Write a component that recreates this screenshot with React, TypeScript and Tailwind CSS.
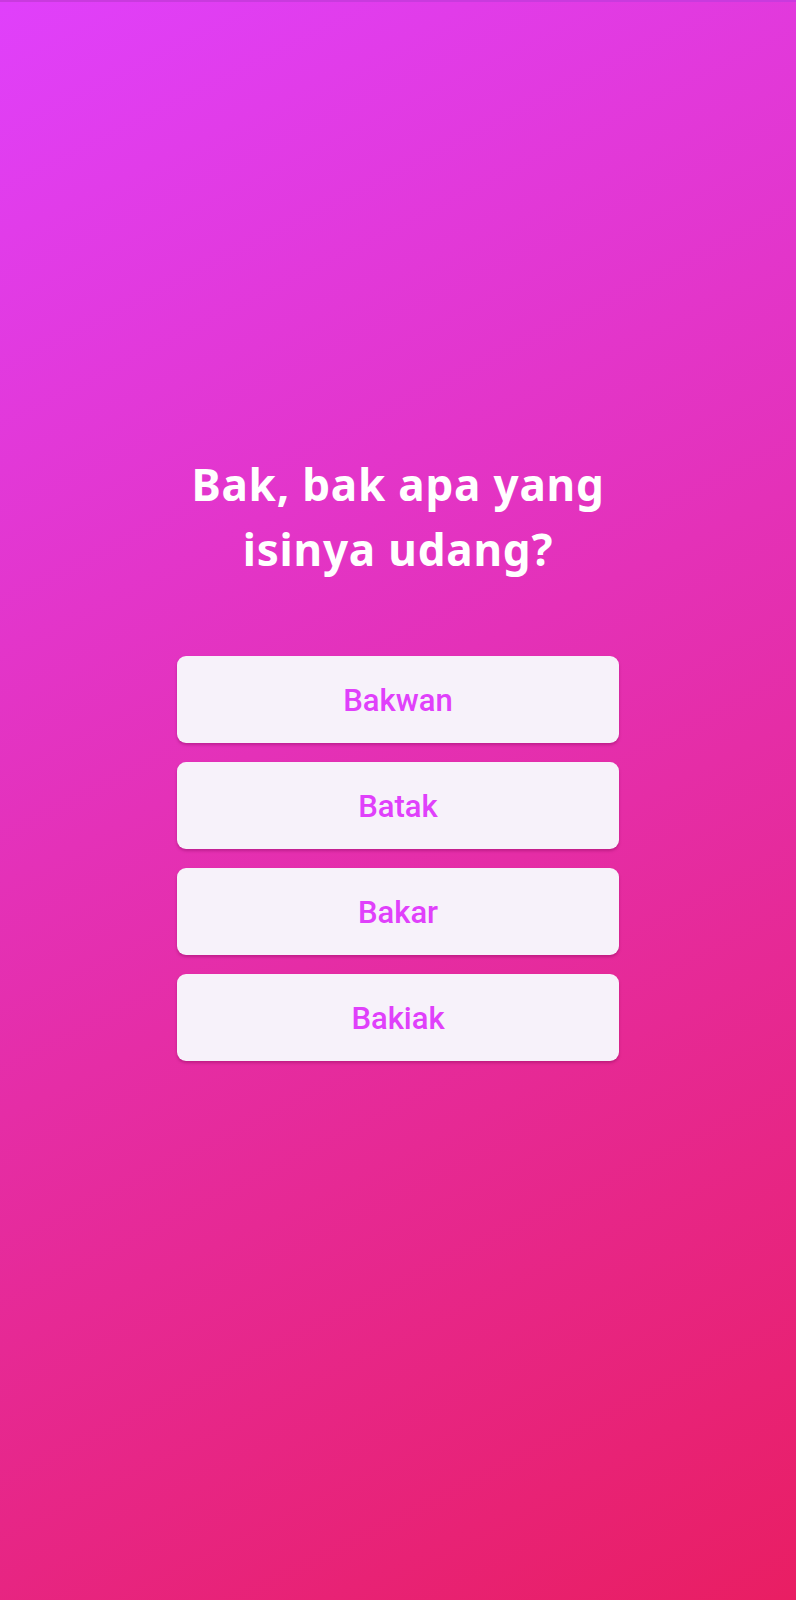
import React from "react";

const options = ["Bakwan", "Batak", "Bakar", "Bakiak"];

export default function App() {
  return (
    <div className="w-[796px] h-[1600px] bg-[linear-gradient(153.55deg,#e040fb,#e91e63)] border-t-2 border-[#c93ade] flex flex-col items-center">
      <div className="pt-[450px] w-full flex flex-col items-center">
        <h1
          className="text-white font-bold text-[44px] leading-[65px] tracking-[0.8px] text-center w-[480px]"
          style={{ fontFamily: '"Noto Sans", "Open Sans", sans-serif' }}
        >
          Bak, bak apa yang isinya udang?
        </h1>
        <div className="mt-[74px] flex flex-col gap-[19px]">
          {options.map((o) => (
            <button
              key={o}
              className="w-[442px] h-[87px] rounded-[9px] bg-[#f7f2fa] text-[#e040fb] text-[31px] font-medium pt-[4px] shadow-[0_2px_3px_rgba(120,0,80,0.35)] flex items-center justify-center"
              style={{ fontFamily: 'Roboto, "Liberation Sans", sans-serif' }}
            >
              {o}
            </button>
          ))}
        </div>
      </div>
    </div>
  );
}
